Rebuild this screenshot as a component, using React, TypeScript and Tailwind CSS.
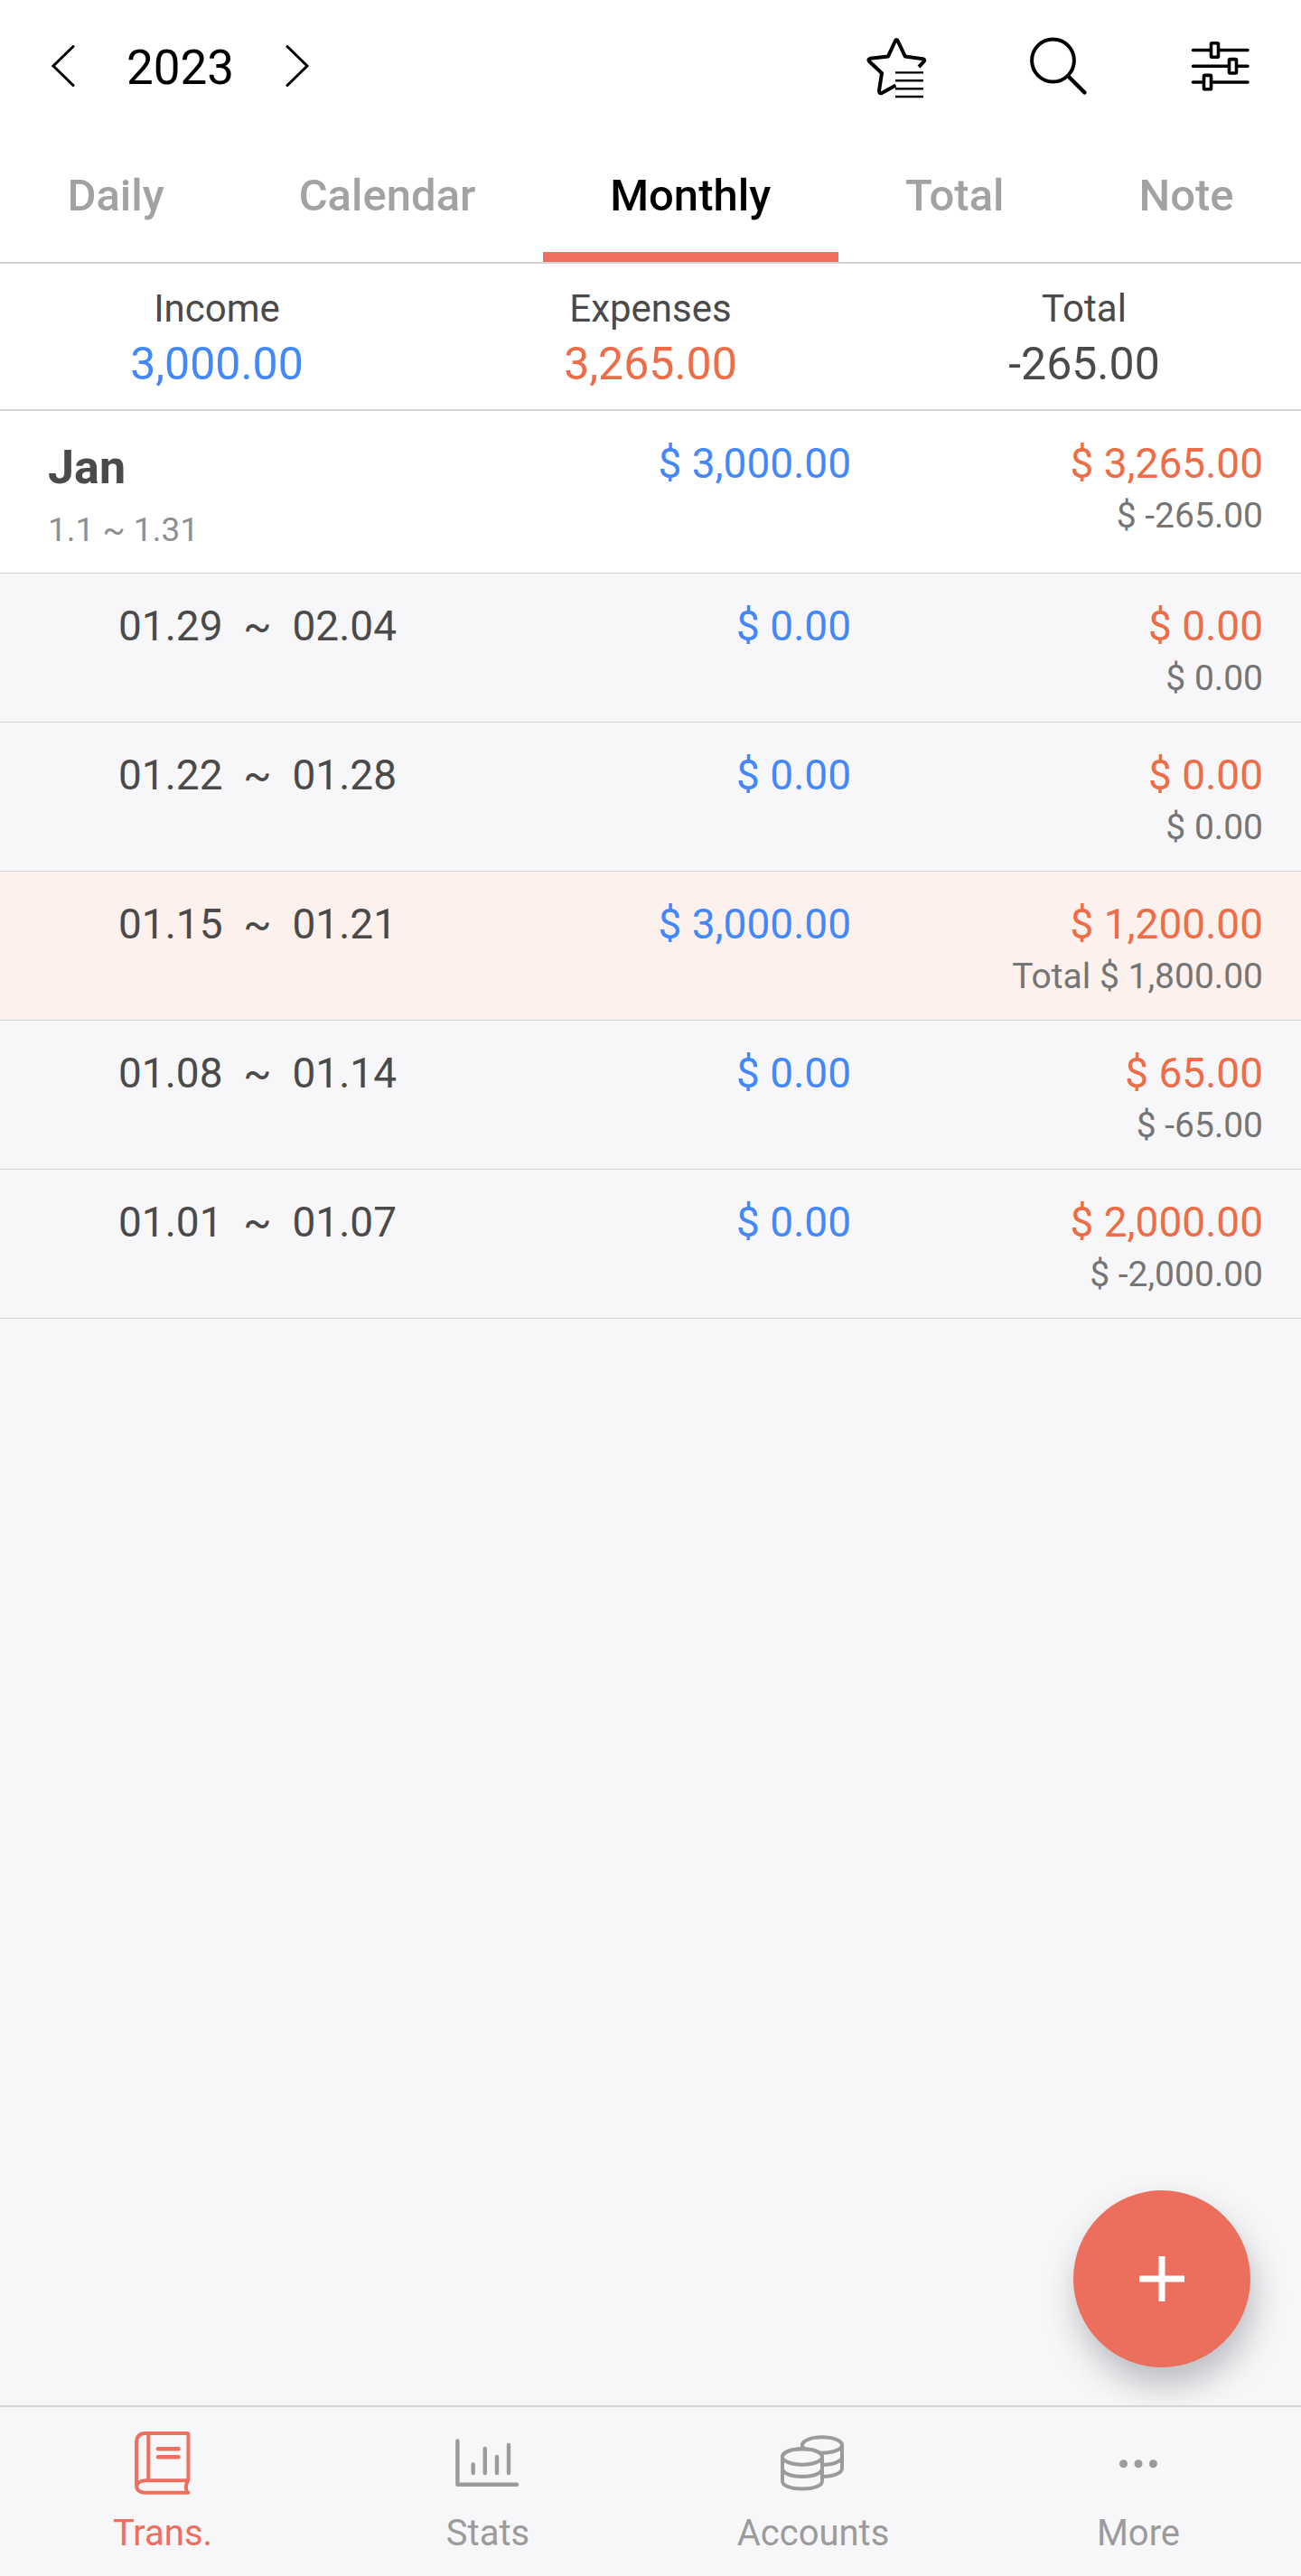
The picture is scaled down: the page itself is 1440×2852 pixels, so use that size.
import { useState } from "react";
import type { ReactNode } from "react";
import clsx from "clsx";

const tabs = ["Daily", "Calendar", "Monthly", "Total", "Note"];

const summary = [
  { label: "Income", value: "3,000.00", color: "text-[#4388fb]" },
  { label: "Expenses", value: "3,265.00", color: "text-[#ee6c47]" },
  { label: "Total", value: "-265.00", color: "text-[#4a4a4a]" },
];

const weeks = [
  { from: "01.29", to: "02.04", income: "$ 0.00", expense: "$ 0.00", total: "$ 0.00" },
  { from: "01.22", to: "01.28", income: "$ 0.00", expense: "$ 0.00", total: "$ 0.00" },
  { from: "01.15", to: "01.21", income: "$ 3,000.00", expense: "$ 1,200.00", total: "Total $ 1,800.00", current: true },
  { from: "01.08", to: "01.14", income: "$ 0.00", expense: "$ 65.00", total: "$ -65.00" },
  { from: "01.01", to: "01.07", income: "$ 0.00", expense: "$ 2,000.00", total: "$ -2,000.00" },
];

function Icon({ children, width = 4 }: { children: ReactNode; width?: number }) {
  return (
    <svg
      className="size-[72px]"
      viewBox="0 0 72 72"
      fill="none"
      stroke="currentColor"
      strokeWidth={width}
      strokeLinecap="round"
      strokeLinejoin="round"
      aria-hidden="true"
    >
      {children}
    </svg>
  );
}

function StarListIcon() {
  return (
    <Icon>
      <path
        strokeLinecap="butt"
        d="M61 36 66.6 30.2Q68.2 27.8 65.4 27.2L45.8 24.4 37.6 7.2Q36.3 5 35 7.2L27 24.4 7 26.8Q4.4 27.6 6.2 30L20 43 17 62.6Q17 66 20 65L35.5 56.6"
      />
      <path strokeWidth="2.4" strokeLinecap="butt" d="M35 42.4H66M35 51.3H66M35 60.2H66M35 69H66" />
    </Icon>
  );
}

function SearchIcon() {
  return (
    <Icon>
      <circle cx="29.5" cy="29" r="23.4" />
      <path strokeWidth="4.4" d="M47.5 47.500 64.500 64.500" />
    </Icon>
  );
}

function SlidersIcon() {
  return (
    <Icon width={3.6}>
      <path d="M4.5 17.5H24M33 17.5H65M4.5 35.2H44M53 35.2H65M4.5 53H16M25 53H65" />
      <rect x="24.5" y="9.8" width="8" height="15.4" rx="1" />
      <rect x="44.5" y="27.6" width="8" height="15.4" rx="1" />
      <rect x="16.5" y="45.4" width="8" height="15.4" rx="1" />
    </Icon>
  );
}

function BookIcon() {
  return (
    <Icon>
      <path d="M7 62V14Q7.4 3.9 17 3.9H63Q64.4 3.9 64.4 5.3V56.3H17C4 56.3 4 69.7 17 69.7H64.4" />
      <path d="M20.3 4V56M63.5 57.5Q60.5 63 63 69" />
      <path strokeWidth="4.6" d="M31 21.3H53.5M31 30.2H53.5" />
    </Icon>
  );
}

function StatsIcon() {
  return (
    <Icon width={4.4}>
      <path d="M2.4 12.5V60.8H68" />
      <path d="M19.7 38.5V48M32.8 21V48M46 30V48M59 17V48" />
    </Icon>
  );
}

function CoinsIcon() {
  return (
    <Icon>
      <path d="M24 17V30M68 17V43C68 48 58 52 46 52M68 30C68 35 58 38.8 46 38.8" />
      <ellipse cx="46" cy="17" rx="22" ry="8.8" />
      <path className="fill-[#f7f7f9]" d="M2 30V57C2 62 11 65.5 24 65.5S46 62 46 57V30C46 25 36 21.2 24 21.2S2 25 2 30" />
      <ellipse cx="24" cy="30" rx="22" ry="8.8" />
      <path d="M2 43C2 48 11 52 24 52S46 48 46 43" />
    </Icon>
  );
}

function MoreIcon() {
  return (
    <Icon>
      <g fill="currentColor" stroke="none">
        <circle cx="19.5" cy="37.7" r="4.5" />
        <circle cx="36" cy="37.7" r="4.5" />
        <circle cx="52.4" cy="37.7" r="4.5" />
      </g>
    </Icon>
  );
}

const navItems = [
  { label: "Trans.", icon: <BookIcon />, active: true },
  { label: "Stats", icon: <StatsIcon /> },
  { label: "Accounts", icon: <CoinsIcon /> },
  { label: "More", icon: <MoreIcon /> },
];

function Chevron({ d }: { d: string }) {
  return (
    <svg
      className="h-12 w-7"
      viewBox="0 0 28 48"
      fill="none"
      stroke="currentColor"
      strokeWidth="3"
      strokeLinecap="round"
      aria-hidden="true"
    >
      <path d={d} />
    </svg>
  );
}

function Header() {
  const [year, setYear] = useState(2023);

  return (
    <header className="flex h-[148px] items-center justify-between pr-[52px] pl-14 text-black">
      <div className="flex items-center gap-14">
        <button type="button" aria-label="Previous year" onClick={() => setYear(year - 1)}>
          <Chevron d="M25 1.5 3 23 25 44.5" />
        </button>
        <h1 className="pt-0.5 text-[53px] leading-[64px]">{year}</h1>
        <button type="button" aria-label="Next year" onClick={() => setYear(year + 1)}>
          <Chevron d="M3 1.5 25 23 3 44.5" />
        </button>
      </div>
      <div className="flex items-center gap-[108px]">
        <button type="button" aria-label="Favorites">
          <StarListIcon />
        </button>
        <button type="button" aria-label="Search">
          <SearchIcon />
        </button>
        <button type="button" aria-label="Filter">
          <SlidersIcon />
        </button>
      </div>
    </header>
  );
}

function Tabs() {
  const [active, setActive] = useState("Monthly");

  return (
    <div role="tablist" className="flex h-36 border-b-2 border-[#d4d4d4]">
      {tabs.map((tab) => (
        <button
          key={tab}
          type="button"
          role="tab"
          aria-selected={tab === active}
          onClick={() => setActive(tab)}
          className={clsx(
            "flex-auto border-b-[11px] pt-[7px] text-[49px] leading-[60px] font-medium",
            tab === active ? "border-[#ee6e60] text-black" : "border-transparent text-[#a2a2a2]"
          )}
        >
          {tab}
        </button>
      ))}
    </div>
  );
}

function Summary() {
  return (
    <dl className="grid grid-cols-3 border-b-2 border-[#d4d4d4] pt-5 pb-[19px] text-center">
      {summary.map((item) => (
        <div key={item.label}>
          <dt className="text-[42px] leading-[60px] text-[#4a4a4a]">{item.label}</dt>
          <dd className={clsx("text-[50px] leading-[62px]", item.color)}>{item.value}</dd>
        </div>
      ))}
    </dl>
  );
}

function Amounts({ income, expense, total }: { income: string; expense: string; total: string }) {
  return (
    <>
      <td className="border-b border-[#d4d4d6] pt-[29px] text-right align-top text-[46px] leading-[58px] text-[#4388fb]">
        {income}
      </td>
      <td className="border-b border-[#d4d4d6] pt-[29px] pr-[42px] pb-[19px] text-right align-top">
        <div className="text-[46px] leading-[58px] text-[#ee6c47]">{expense}</div>
        <div className="text-[39px] leading-[58px] text-[#757575]">{total}</div>
      </td>
    </>
  );
}

function MonthTable() {
  return (
    <table className="w-full table-fixed border-separate border-spacing-0">
      <colgroup>
        <col />
        <col className="w-[366px]" />
        <col className="w-[498px]" />
      </colgroup>
      <tbody>
        <tr className="bg-white">
          <th scope="row" className="border-b border-[#d4d4d6] pt-[29px] pb-3 pl-[53px] text-left font-normal">
            <div className="text-[52px] leading-[68px] font-bold text-[#4a4a4a]">Jan</div>
            <div className="text-[37px] leading-[70px] text-[#8f8f8f]">1.1 ~ 1.31</div>
          </th>
          <Amounts income="$ 3,000.00" expense="$ 3,265.00" total="$ -265.00" />
        </tr>
        {weeks.map((week) => (
          <tr key={week.from} className={week.current ? "bg-[#fcf1ed]" : "bg-[#f7f7f9]"}>
            <th
              scope="row"
              className="border-b border-[#d4d4d6] pt-[29px] pl-[131px] text-left align-top text-[46px] leading-[58px] font-normal whitespace-pre text-[#4a4a4a]"
            >
              {`${week.from}  ~  ${week.to}`}
            </th>
            <Amounts income={week.income} expense={week.expense} total={week.total} />
          </tr>
        ))}
      </tbody>
    </table>
  );
}

function BottomNav() {
  return (
    <nav className="grid grid-cols-4 border-t-2 border-[#d4d4d6] pt-[25px] pb-[17px]">
      {navItems.map((item) => (
        <a
          key={item.label}
          href="#"
          aria-current={item.active ? "page" : undefined}
          className={clsx("flex flex-col items-center gap-[13px]", item.active ? "text-[#ee6e60]" : "text-[#9b9b9b]")}
        >
          {item.icon}
          <span className="text-[40px] leading-[60px]">{item.label}</span>
        </a>
      ))}
    </nav>
  );
}

export default function App() {
  return (
    <div className="flex min-h-screen flex-col bg-[#f7f7f9] font-[Roboto,sans-serif]">
      <div className="bg-white">
        <Header />
        <Tabs />
        <Summary />
      </div>
      <main className="relative flex-1 overflow-hidden">
        <MonthTable />
        <button
          type="button"
          aria-label="Add transaction"
          className="absolute right-14 bottom-[42px] flex size-[196px] items-center justify-center rounded-full bg-[#ec6e5d] text-white shadow-[4px_20px_36px_rgba(40,40,50,0.28)]"
        >
          <svg className="size-[50px]" viewBox="0 0 50 50" stroke="currentColor" strokeWidth="7" aria-hidden="true">
            <path d="M25 0V50M0 25H50" />
          </svg>
        </button>
      </main>
      <BottomNav />
    </div>
  );
}
